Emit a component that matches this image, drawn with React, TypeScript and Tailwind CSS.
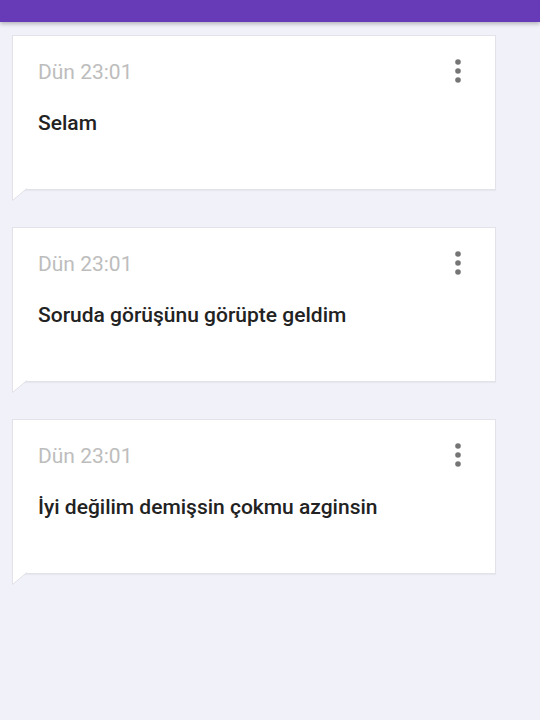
import React from "react";

const messages = [
  "Selam",
  "Soruda görüşünu görüpte geldim",
  "İyi değilim demişsin çokmu azginsin",
];

function Dots() {
  return (
    <svg width="8" height="26" viewBox="0 0 8 26" className="block">
      <circle cx="4" cy="4" r="2.8" fill="#757575" />
      <circle cx="4" cy="13" r="2.8" fill="#757575" />
      <circle cx="4" cy="22" r="2.8" fill="#757575" />
    </svg>
  );
}

function Card({ text }: { text: string }) {
  return (
    <div className="relative w-[484px] h-[155px] bg-white border border-[#e2e2e8] shadow-[0_1px_1px_rgba(0,0,0,0.04)]">
      <div className="flex items-start justify-between pl-[25px] pr-[33px] pt-[23px]">
        <div className="text-[21px] leading-[26px] text-[#bdbdbd] font-normal">Dün 23:01</div>
        <div className="mt-[-1px]">
          <Dots />
        </div>
      </div>
      <div className="pl-[25px] mt-[25px] text-[21px] leading-[26px] text-[#222222] font-medium">{text}</div>
      <svg
        className="absolute left-[-1px] bottom-[-13px]"
        width="18"
        height="14"
        viewBox="0 0 18 14"
      >
        <polygon points="0,0 0,12.5 15,0" fill="#ffffff" />
        <rect x="1" y="0" width="14" height="1.2" fill="#ffffff" />
        <line x1="0.5" y1="0" x2="0.5" y2="12.5" stroke="#e2e2e8" strokeWidth="1" />
        <line x1="0.5" y1="12.5" x2="15" y2="0.5" stroke="#e2e2e8" strokeWidth="1" />
      </svg>
    </div>
  );
}

export default function App() {
  return (
    <div
      className="w-[540px] h-[720px] bg-[#f1f1f9] overflow-hidden"
      style={{ fontFamily: "Roboto, 'Noto Sans', sans-serif" }}
    >
      <div className="h-[22px] bg-[#673ab7] shadow-[0_2px_4px_rgba(0,0,0,0.25)]" />
      <div className="flex flex-col gap-[37px] pl-[12px] pt-[13px]">
        {messages.map((m, i) => (
          <Card key={i} text={m} />
        ))}
      </div>
    </div>
  );
}
